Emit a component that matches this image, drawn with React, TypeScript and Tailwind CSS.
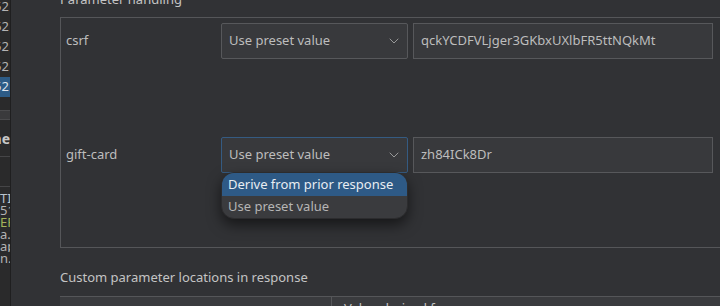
import { ChevronDown } from 'lucide-react'

const FONT = { fontFamily: '"Noto Sans", "Open Sans", sans-serif' }

const TOP_ROWS = ['1752', '1762', '1752', '1752', '1752']
const LOG_ROWS = [
  { t: 'TITLE', c: 'text-[#b9c3cc]' },
  { t: '51234', c: 'text-[#b3b3b3]' },
  { t: 'ERROR', c: 'text-[#a5b25a]' },
  { t: 'a.b', c: 'text-[#b3b3b3]' },
  { t: 'apply', c: 'text-[#b3b3b3]' },
  { t: 'n.x', c: 'text-[#b3b3b3]' },
]

function SideStrip() {
  return (
    <div className="w-[11px] shrink-0 h-[306px] bg-[#2a2a2b] border-r border-[#1f1f20] overflow-hidden flex flex-col text-[13px] text-[#b3b3b3]">
      <div className="-mt-[3px] flex flex-col shrink-0">
        {TOP_ROWS.map((r, i) => (
          <div
            key={i}
            className={`h-[20px] flex items-center justify-end overflow-hidden whitespace-nowrap pr-[1px] ${
              i === 4 ? 'bg-[#2d5b86] text-[#dfe6ee]' : ''
            }`}
          >
            {r}
          </div>
        ))}
      </div>
      <div className="h-[13px] shrink-0" />
      <div className="h-[10px] shrink-0 bg-[#3a3a3c] border-y border-[#4a4a4c]" />
      <div className="h-[37px] shrink-0 flex items-center justify-end overflow-hidden whitespace-nowrap font-bold text-[14px] text-[#c8c8c8] border-b border-[#454547]">
        Name
      </div>
      <div className="h-[30px] shrink-0 border-b border-[#454547]" />
      <div className="flex flex-col shrink-0 pt-[5px] text-[13px] leading-[12px]">
        {LOG_ROWS.map((r, i) => (
          <div key={i} className={`h-[12px] shrink-0 overflow-hidden whitespace-nowrap ${r.c}`}>
            {r.t}
          </div>
        ))}
      </div>
    </div>
  )
}

function Select({ focused, children }: { focused?: boolean; children: React.ReactNode }) {
  return (
    <div
      className={`w-[187px] h-[36px] shrink-0 flex items-center justify-between pl-[7px] pr-[5px] bg-[#38393c] border rounded-[2px] ${
        focused ? 'border-[#355b82]' : 'border-[#57585b]'
      }`}
    >
      <span className="text-[13px] text-[#bdbdbd]">{children}</span>
      <ChevronDown size={16} strokeWidth={1.3} className="text-[#a8a8a8]" />
    </div>
  )
}

function TextField({ value }: { value: string }) {
  return (
    <div className="w-[300px] h-[36px] shrink-0 flex items-center pl-[7px] bg-[#38393c] border border-[#57585b]">
      <span className="text-[13px] text-[#bdbdbd]">{value}</span>
    </div>
  )
}

export default function App() {
  return (
    <div className="w-[720px] h-[306px] overflow-hidden flex bg-[#313235]" style={FONT}>
      <SideStrip />
      <div className="flex-1 flex flex-col pl-[49px] relative">
        <div className="h-[17px] shrink-0 -mt-[10px] text-[13px] leading-[18px] text-[#c4c4c4] whitespace-nowrap">
          Parameter handling
        </div>
        <div className="mt-[10px] shrink-0 w-[670px] h-[231px] border border-[#555659] flex flex-col pt-[5px] pl-[5px] relative">
          <div className="flex items-center h-[36px] shrink-0">
            <div className="w-[155px] text-[13px] text-[#bdbdbd]">csrf</div>
            <Select>Use preset value</Select>
            <div className="w-[5px]" />
            <TextField value="qckYCDFVLjger3GKbxUXlbFR5ttNQkMt" />
          </div>
          <div className="h-[78px] shrink-0" />
          <div className="flex items-center h-[36px] shrink-0">
            <div className="w-[155px] text-[13px] text-[#bdbdbd]">gift-card</div>
            <Select focused>Use preset value</Select>
            <div className="w-[5px]" />
            <TextField value="zh84ICk8Dr" />
          </div>

          {/* dropdown popup */}
          <div className="absolute left-[160px] top-[154px] w-[187px] h-[47px] rounded-[13px] overflow-hidden bg-[#3a3b3e] border border-[#2c2c2e] shadow-[0_6px_14px_rgba(0,0,0,0.55)] flex flex-col text-[13px] z-10">
            <div className="h-[23px] flex items-center pl-[6px] bg-[#2e5a86] text-[#e8edf2]">
              Derive from prior response
            </div>
            <div className="h-[22px] flex items-center pl-[6px] text-[#b5b5b5]">Use preset value</div>
          </div>
        </div>
        <div className="h-[48px] shrink-0 flex items-center pt-[11px] text-[13px] text-[#c4c4c4]">
          Custom parameter locations in response
        </div>
        <div className="w-[670px] h-[20px] shrink-0 flex border-t border-[#555659] bg-[#3a3b3e]">
          <div className="w-[272px] border-r border-[#555659]" />
          <div className="pl-[12px] pt-[2px] text-[13px] text-[#c4c4c4] whitespace-nowrap">Value derived from</div>
        </div>
      </div>
    </div>
  )
}
